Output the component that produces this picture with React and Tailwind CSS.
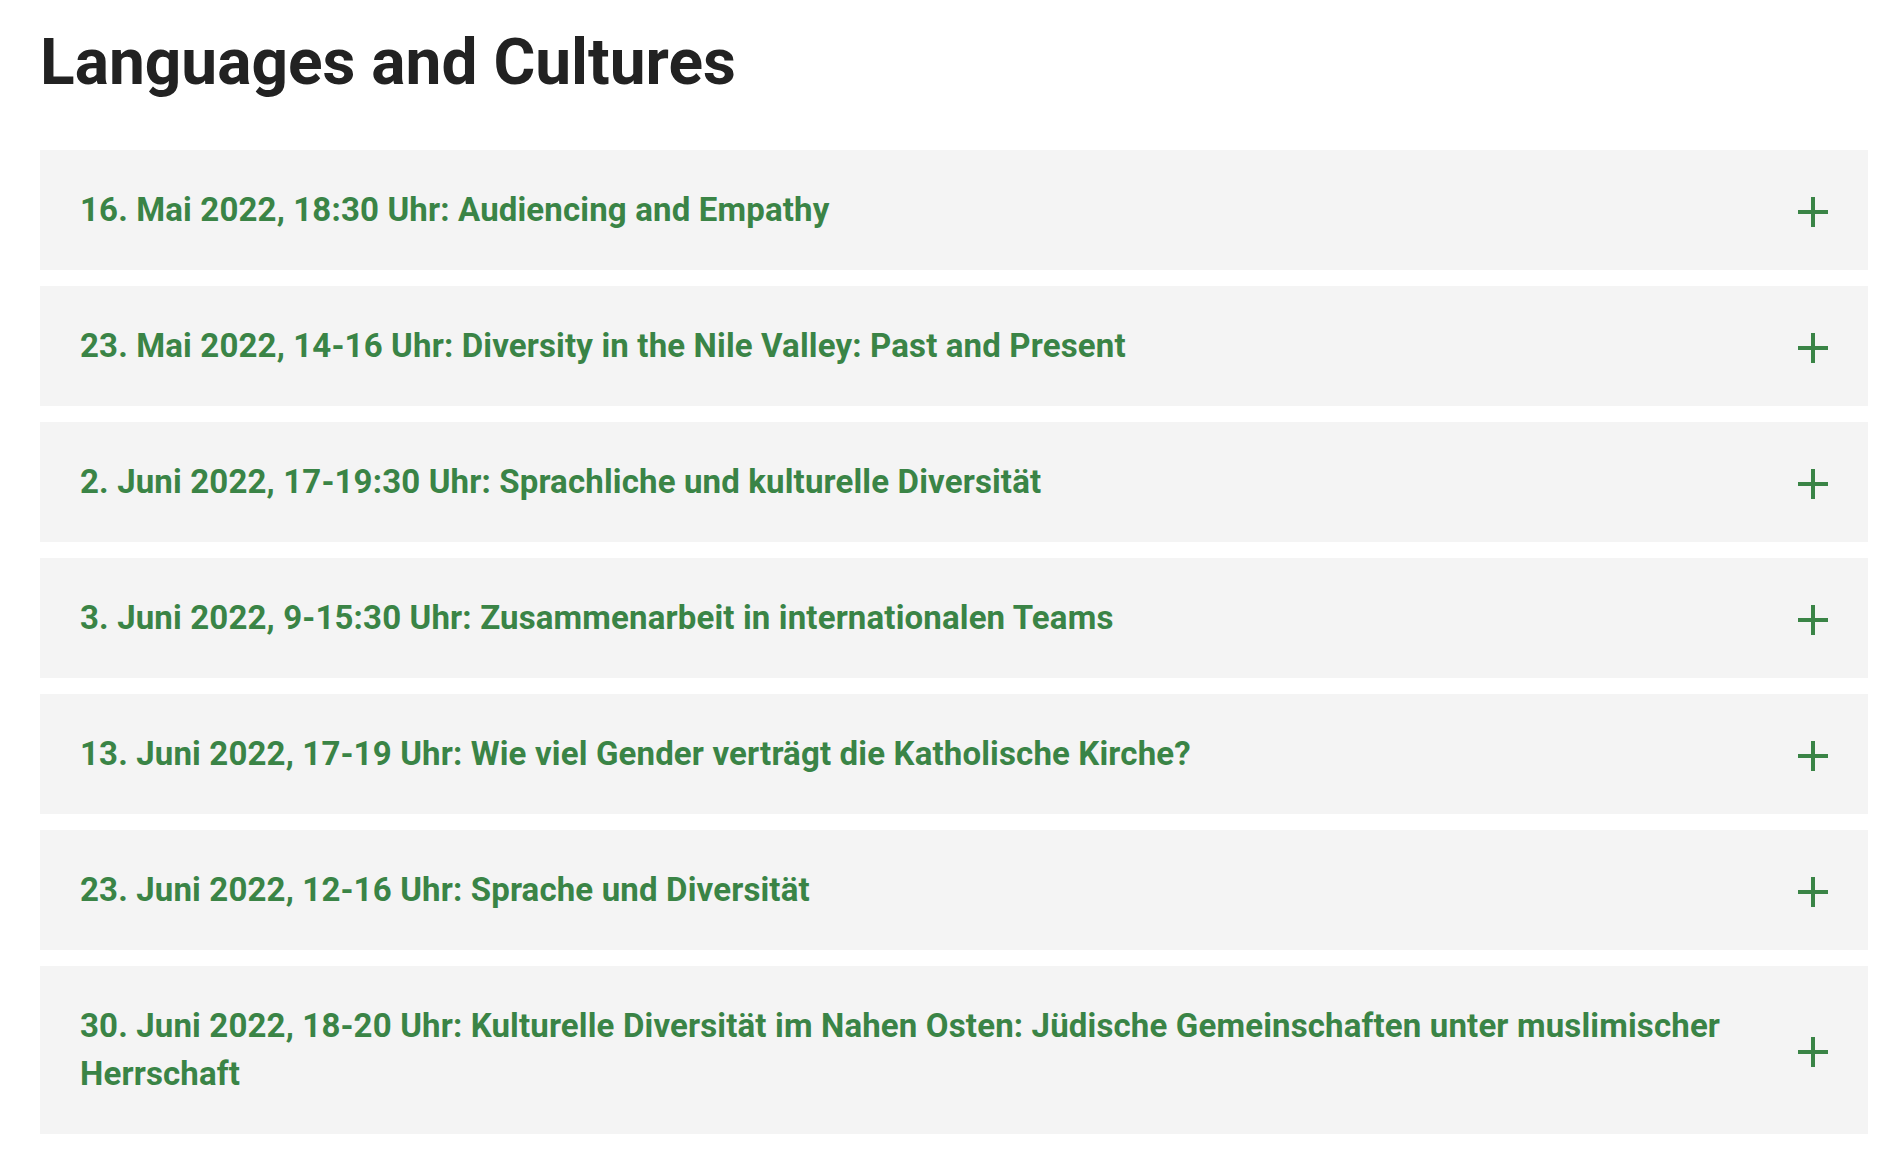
// Accordion list of event dates under a section heading.

const events = [
  "16. Mai 2022, 18:30 Uhr: Audiencing and Empathy",
  "23. Mai 2022, 14-16 Uhr: Diversity in the Nile Valley: Past and Present",
  "2. Juni 2022, 17-19:30 Uhr: Sprachliche und kulturelle Diversität",
  "3. Juni 2022, 9-15:30 Uhr: Zusammenarbeit in internationalen Teams",
  "13. Juni 2022, 17-19 Uhr: Wie viel Gender verträgt die Katholische Kirche?",
  "23. Juni 2022, 12-16 Uhr: Sprache und Diversität",
  "30. Juni 2022, 18-20 Uhr: Kulturelle Diversität im Nahen Osten: Jüdische Gemeinschaften unter muslimischer Herrschaft",
];

function PlusIcon() {
  return (
    <span className="relative block h-[30px] w-[30px] shrink-0 mt-[4px]">
      <span className="absolute left-0 top-[13px] h-[4px] w-[30px] bg-[#3a8446]" />
      <span className="absolute left-[13px] top-0 h-[30px] w-[4px] bg-[#3a8446]" />
    </span>
  );
}

export default function App() {
  return (
    <div className="min-h-screen bg-white font-['Roboto',sans-serif]">
      <div className="w-[1828px] ml-[40px] pt-[25px]">
        {/* Heading */}
        <h1 className="text-[64px] leading-[76px] font-bold text-[#222222] mb-[49px]">
          Languages and Cultures
        </h1>

        {/* Accordion rows */}
        <div className="flex flex-col gap-[16px]">
          {events.map((title) => (
            <button
              key={title}
              className="flex items-center justify-between bg-[#f4f4f4] pl-[40px] pr-[40px] py-[36px] text-left"
            >
              <span className="text-[33px] leading-[48px] tracking-[0.15px] font-bold text-[#3a8446] pr-[60px]">
                {title}
              </span>
              <PlusIcon />
            </button>
          ))}
        </div>
      </div>
    </div>
  );
}
